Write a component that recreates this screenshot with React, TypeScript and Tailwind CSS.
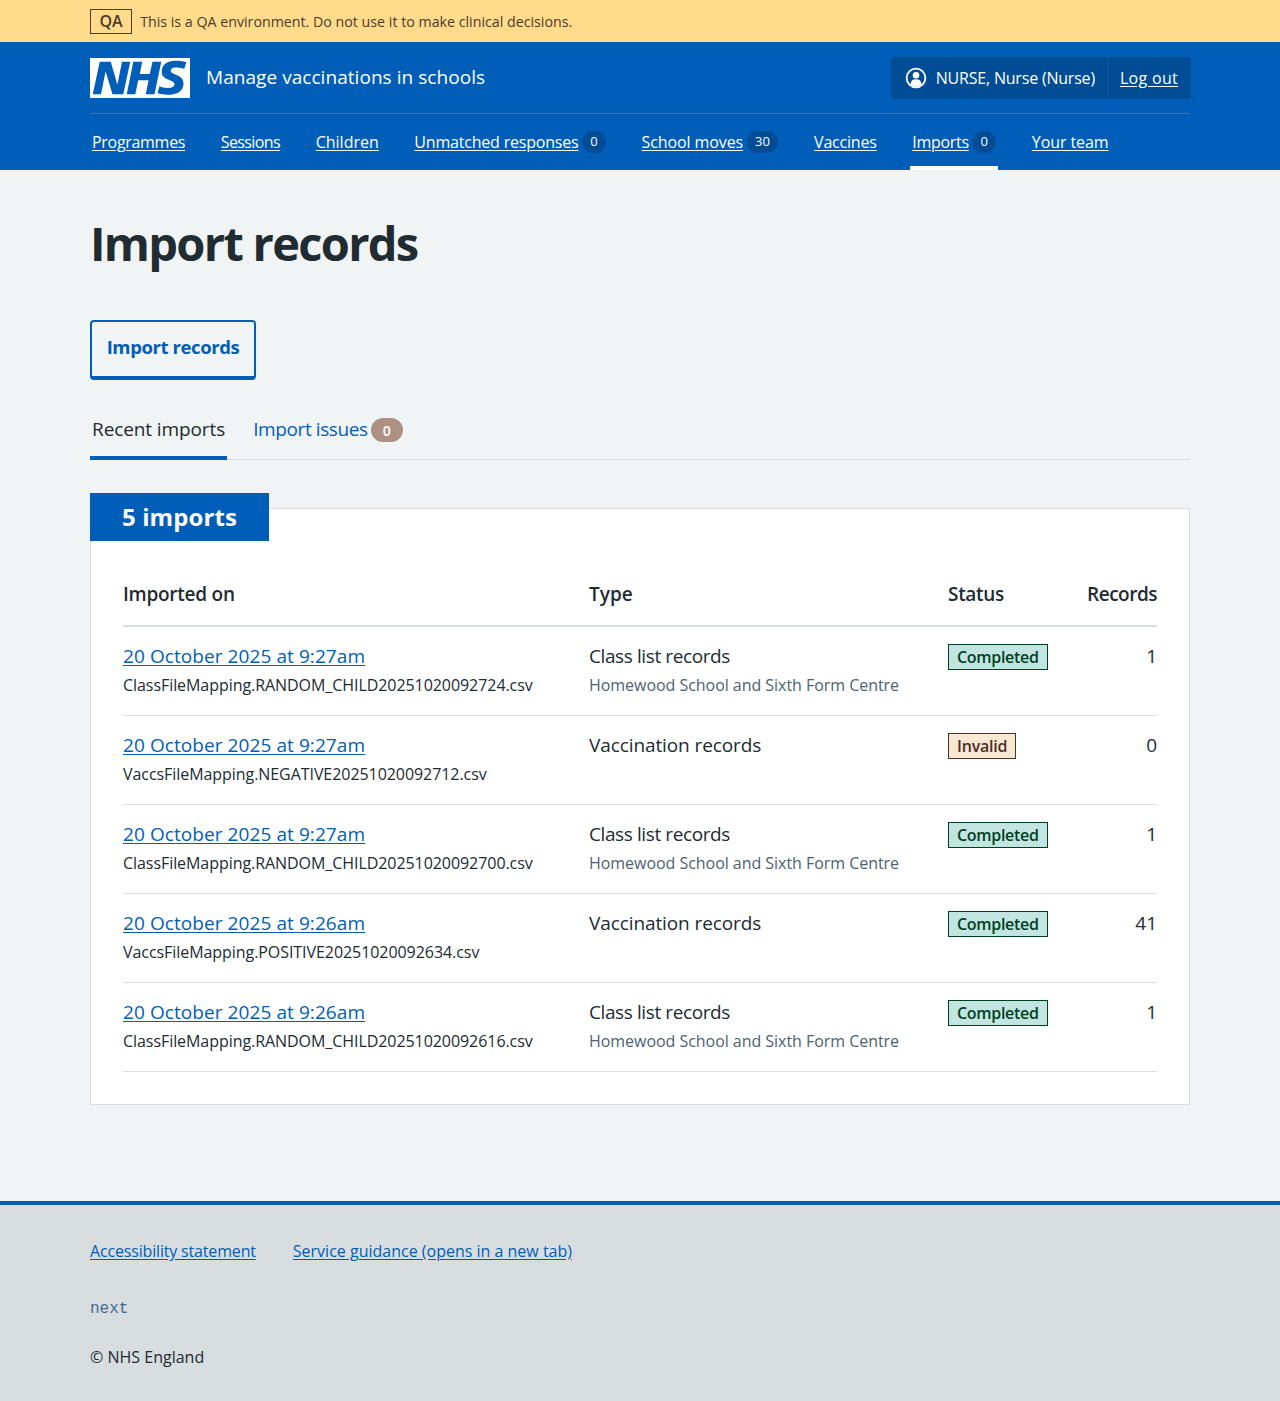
const font = "[font-family:'Open_Sans','Noto_Sans',sans-serif]";

const navItems = [
  { label: "Programmes", tracking: "tracking-[-0.3px]" },
  { label: "Sessions", tracking: "tracking-[-0.6px]" },
  { label: "Children", tracking: "" },
  { label: "Unmatched responses", count: "0", tracking: "tracking-[-0.2px]" },
  { label: "School moves", count: "30", tracking: "tracking-[-0.1px]" },
  { label: "Vaccines", tracking: "tracking-[-0.2px]" },
  { label: "Imports", count: "0", active: true, tracking: "tracking-[-0.3px]" },
  { label: "Your team", tracking: "tracking-[-0.1px]" },
];

const imports = [
  {
    date: "20 October 2025 at 9:27am",
    file: "ClassFileMapping.RANDOM_CHILD20251020092724.csv",
    type: "Class list records",
    school: "Homewood School and Sixth Form Centre",
    status: "Completed",
    records: "1",
  },
  {
    date: "20 October 2025 at 9:27am",
    file: "VaccsFileMapping.NEGATIVE20251020092712.csv",
    type: "Vaccination records",
    status: "Invalid",
    records: "0",
  },
  {
    date: "20 October 2025 at 9:27am",
    file: "ClassFileMapping.RANDOM_CHILD20251020092700.csv",
    type: "Class list records",
    school: "Homewood School and Sixth Form Centre",
    status: "Completed",
    records: "1",
  },
  {
    date: "20 October 2025 at 9:26am",
    file: "VaccsFileMapping.POSITIVE20251020092634.csv",
    type: "Vaccination records",
    status: "Completed",
    records: "41",
  },
  {
    date: "20 October 2025 at 9:26am",
    file: "ClassFileMapping.RANDOM_CHILD20251020092616.csv",
    type: "Class list records",
    school: "Homewood School and Sixth Form Centre",
    status: "Completed",
    records: "1",
  },
];

const NhsLogo = () => (
  <svg viewBox="0 0 40 16" className="h-10 w-[100px] shrink-0" aria-label="NHS">
    <path fill="#fff" d="M0 0h40v16H0z" />
    <path
      fill="#005eb8"
      d="M3.9 1.5h4.4l2.6 9h.1l1.8-9h3.3l-2.8 13H9l-2.7-9h-.1l-1.8 9H1.1M17.3 1.5h3.6l-1 4.9h4L25 1.5h3.5l-2.7 13h-3.5l1.1-5.6h-4.1l-1.2 5.6h-3.4M37.7 4.4c-.7-.3-1.6-.6-2.9-.6-1.4 0-2.5.2-2.5 1.3 0 1.8 5.1 1.2 5.1 5.1 0 3.6-3.3 4.5-6.4 4.5-1.3 0-2.9-.3-4-.7l.8-2.7c.7.4 2.1.7 3.2.7s2.8-.2 2.8-1.5c0-2.1-5.1-1.3-5.1-5 0-3.4 2.9-4.4 5.8-4.4 1.6 0 3.1.2 4 .6"
    />
  </svg>
);

const UserIcon = () => (
  <svg viewBox="0 0 24 24" className="h-[22px] w-[22px] shrink-0" aria-hidden="true">
    <circle cx="12" cy="12" r="10.2" fill="none" stroke="#fff" strokeWidth="2" />
    <circle cx="12" cy="9" r="3.6" fill="#fff" />
    <path fill="#fff" d="M5.8 19.2c.3-3.8 2.6-5.8 6.2-5.8s5.9 2 6.2 5.8A9.6 9.6 0 0 1 12 21.5a9.6 9.6 0 0 1-6.2-2.3z" />
  </svg>
);

const StatusTag = ({ status }: { status: string }) =>
  status === "Completed" ? (
    <span className="inline-block h-[26px] border border-[#00401e] bg-[#c3e5e1] px-2 text-[16px] leading-[24px] font-semibold tracking-[-0.3px] text-[#00401e]">
      {status}
    </span>
  ) : (
    <span className="inline-block h-[26px] border border-[#4c2e2b] bg-[#f8e7d1] px-2 text-[16px] leading-[24px] font-semibold tracking-[-0.2px] text-[#4c2e2b]">
      {status}
    </span>
  );

export default function App() {
  return (
    <div className={`${font} min-h-[1401px] bg-[#f0f4f5] text-[#212b32]`}>
      {/* QA banner */}
      <div className="h-[42px] bg-[#ffdb8b]">
        <div className="mx-[90px] flex h-full items-center gap-2">
          <span className="border border-[#4c3a2b] px-[8.5px] text-[16px] leading-[23px] font-semibold text-[#4c3a2b]">QA</span>
          <span className="mt-[1px] text-[14.23px] text-[#4c3a2b]">This is a QA environment. Do not use it to make clinical decisions.</span>
        </div>
      </div>

      {/* Header */}
      <header className="h-[128px] bg-[#005eb8] text-white">
        <div className="mx-[90px] flex h-[72px] items-center justify-between border-b border-[#2a73bd] pt-[1px]">
          <div className="flex items-center gap-4">
            <NhsLogo />
            <span className="mt-[-1px] text-[19px] tracking-[0.05px]">Manage vaccinations in schools</span>
          </div>
          <div className="mr-[-1px] flex h-[42px] items-center rounded bg-[#004c95] text-[16px]">
            <div className="flex h-full items-center gap-[9px] border-r border-[#0a5aa5] pr-[12px] pl-[14px]">
              <UserIcon />
              <span className="tracking-[-0.2px]">NURSE, Nurse (Nurse)</span>
            </div>
            <a href="#" className="pr-[13px] pl-3 tracking-[0.3px] underline underline-offset-2">Log out</a>
          </div>
        </div>
        <nav className="mx-[90px] flex h-[56px] items-center gap-[31.6px] text-[16px]">
          {navItems.map((item) => (
            <div
              key={item.label}
              className={`flex h-full items-center gap-[3.5px] px-[2px] ${item.active ? "border-b-4 border-white pt-[4px]" : ""}`}
            >
              <a href="#" className={`underline underline-offset-2 ${item.tracking}`}>{item.label}</a>
              {item.count && (
                <span
                  className={`flex h-[22px] min-w-[24px] items-center justify-center rounded-full bg-[#004c95] text-[13px] ${item.count.length > 1 ? "px-[8.5px]" : "px-[6px]"}`}
                >
                  {item.count}
                </span>
              )}
            </div>
          ))}
        </nav>
      </header>

      <main className="mx-[90px] pt-[39px]">
        <h1 className="text-[47px] leading-[68px] font-bold tracking-[-1.7px]">Import records</h1>

        <a
          href="#"
          className="mt-[43px] flex h-[60px] w-[166px] items-center justify-center rounded border-2 border-b-4 border-[#005eb8] pb-[5px] text-[18.5px] font-bold tracking-[-0.4px] text-[#005eb8]"
        >
          Import records
        </a>

        {/* Tabs */}
        <div className="mt-[30px] flex h-[50px] items-stretch gap-[26px] border-b border-[#d8dde0] text-[19px]">
          <div className="-mb-px flex items-center border-b-4 border-[#005eb8] px-[2px] pb-[8px] tracking-[-0.1px]">Recent imports</div>
          <div className="flex items-center gap-[3px] pb-[9px] text-[#005eb8]">
            <span className="mt-[-2px] tracking-[-0.4px]">Import issues</span>
            <span className="flex h-6 w-8 items-center justify-center rounded-full bg-[#ae9182] text-[14px] font-semibold text-white">0</span>
          </div>
        </div>

        {/* Card */}
        <section className="relative mt-[48px] h-[597px] border border-[#d8dde0] bg-white px-[32px] pt-[65px]">
          <h2 className="absolute top-[-16px] left-[-1px] bg-[#005eb8] px-[32px] text-[24px] leading-[48px] font-bold tracking-[0.1px] text-white">
            5 imports
          </h2>
          <table className="w-full table-fixed border-collapse text-[19px]">
            <thead>
              <tr className="h-[52px] border-b-2 border-[#d8dde0] text-left">
                <th className="w-[466px] pb-[10px] font-semibold tracking-[-0.25px]">Imported on</th>
                <th className="w-[359px] pb-[10px] font-semibold">Type</th>
                <th className="pb-[10px] font-semibold tracking-[-0.3px]">Status</th>
                <th className="w-[72px] pb-[10px] text-right font-semibold tracking-[-0.5px] whitespace-nowrap">Records</th>
              </tr>
            </thead>
            <tbody>
              {imports.map((row) => (
                <tr key={row.file} className="h-[89px] border-b border-[#d8dde0] align-top">
                  <td className="pt-[15px]">
                    <a href="#" className="block leading-[28px] tracking-[0.08px] text-[#005eb8] underline underline-offset-2">{row.date}</a>
                    <div className="mt-[1px] text-[16px] leading-[28px] tracking-[-0.06px]">{row.file}</div>
                  </td>
                  <td className="pt-[15px]">
                    <div className={`leading-[28px] ${row.school ? "tracking-[-0.4px]" : "tracking-[-0.1px]"}`}>{row.type}</div>
                    {row.school && <div className="mt-[1px] text-[16px] leading-[28px] tracking-[-0.04px] text-[#4c6272]">{row.school}</div>}
                  </td>
                  <td className="pt-[15px]"><StatusTag status={row.status} /></td>
                  <td className="pt-[15px] text-right leading-[28px]">{row.records}</td>
                </tr>
              ))}
            </tbody>
          </table>
        </section>
      </main>

      {/* Footer */}
      <footer className="mt-[96px] h-[200px] border-t-4 border-[#005eb8] bg-[#d8dde0]">
        <div className="mx-[90px] pt-[34px]">
          <div className="flex gap-[37px] text-[16px] leading-[24px] text-[#005eb8]">
            <a href="#" className="tracking-[-0.17px] underline underline-offset-2">Accessibility statement</a>
            <a href="#" className="underline underline-offset-2">Service guidance (opens in a new tab)</a>
          </div>
          <div className="mt-[34px] font-['Liberation_Mono',monospace] text-[16px] leading-[24px] text-[#446a94]">next</div>
          <div className="mt-[24px] text-[16px] leading-[24px]">© NHS England</div>
        </div>
      </footer>
    </div>
  );
}
